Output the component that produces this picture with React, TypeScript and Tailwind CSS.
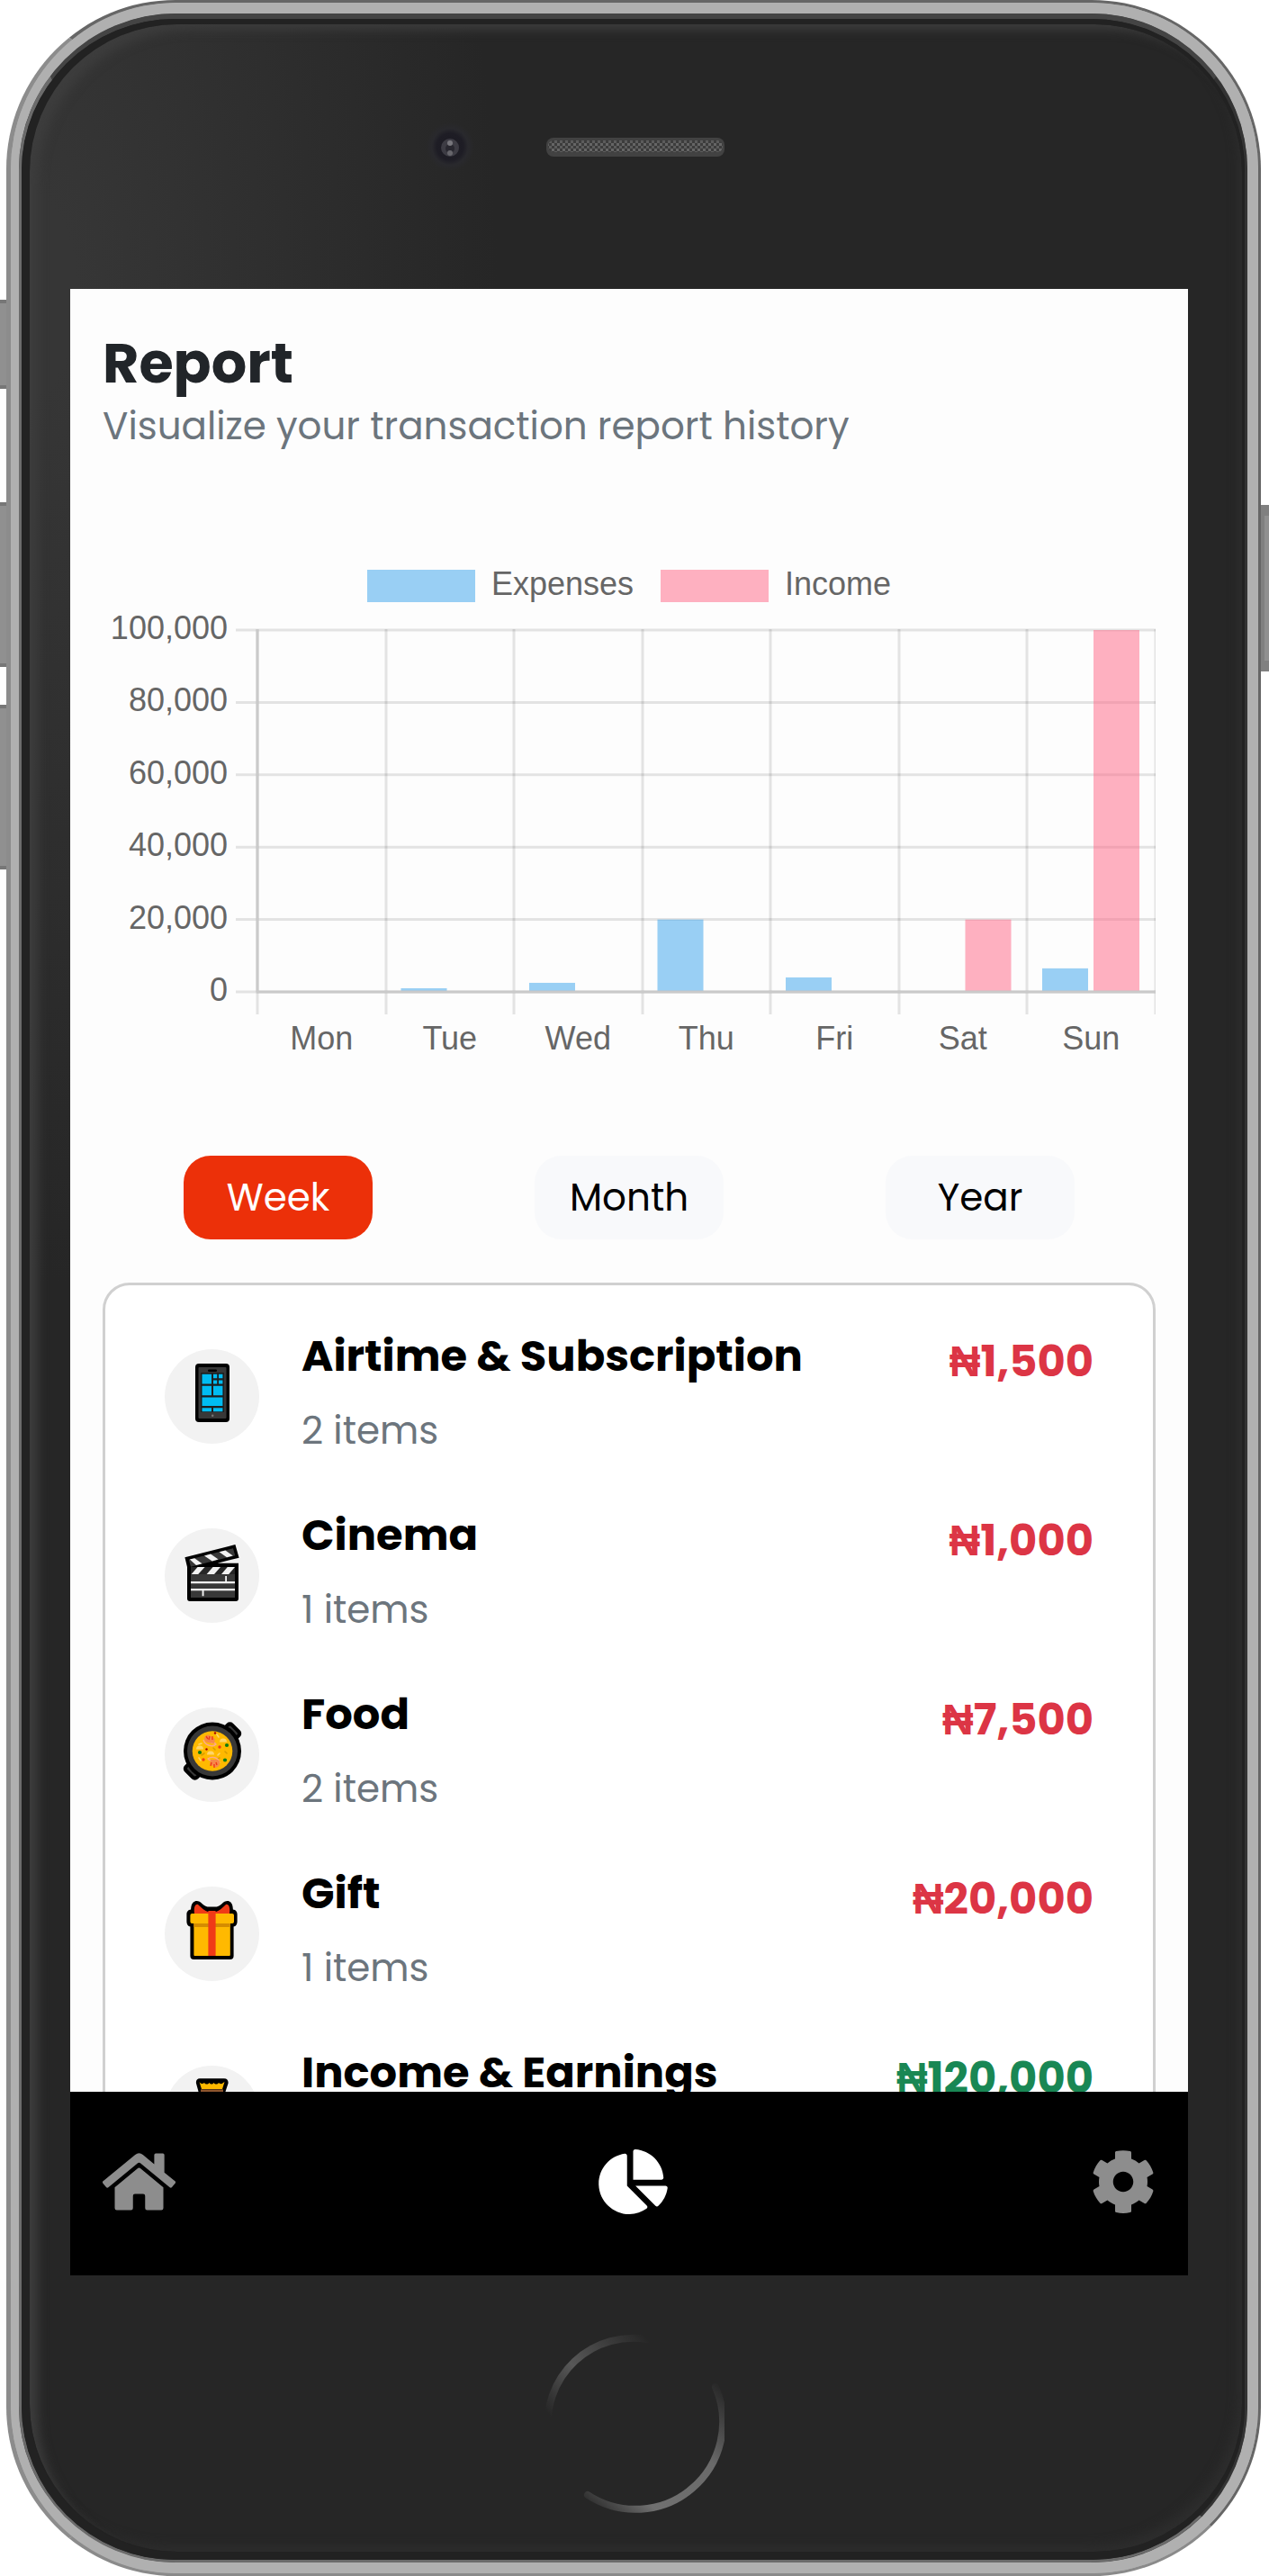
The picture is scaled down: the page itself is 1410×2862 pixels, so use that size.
import { useState } from "react";
import type { ReactNode } from "react";
import { FaChartPie, FaCog, FaHome } from "react-icons/fa";

/* ---------- category icons (72 x 72) ---------- */

function PhoneIcon() {
  return (
    <svg viewBox="0 0 72 72" className="size-[72px]" aria-hidden="true">
      <rect x="17" y="4" width="38" height="65" rx="4" fill="#000" />
      <rect x="20.5" y="8" width="31" height="57" rx="1" fill="#383838" />
      <rect x="31" y="10.4" width="10" height="2.6" rx="1.2" fill="#000" />
      <rect x="23" y="14" width="26" height="44" fill="#1f1f1f" />
      <g fill="#00bcf2">
        <path d="M24.5 15.8H35v10.8H24.5zM37 15.8h4.2v4.4H37zM43 15.8h4.4v4.4H43zM37 22.4h4.2v4.2H37zM43 22.4h4.4v4.2H43z" />
        <path d="M24.5 28.8H35v10.4H24.5zM37 28.8h10.4v10.4H37zM24.5 41.4h22.9V51H24.5zM24.5 53.2H35v4H24.5zM37 53.2h10.4v4H37z" />
      </g>
      <rect x="35" y="60.6" width="2.4" height="2.4" rx="1" fill="#777" />
    </svg>
  );
}

function ClapperIcon() {
  return (
    <svg viewBox="0 0 72 72" className="size-[72px]" aria-hidden="true">
      <path d="M5.4 20.3 61.4 6l4.2 14.7-24 6H65V66a3 3 0 0 1-3 3H11a3 3 0 0 1-3-3V31Z" fill="#000" />
      <path d="M9.8 22.8 59 10.2l2.2 8L12 30.8Z" fill="#383838" />
      <path d="m10.8 22.6 5.4-1.4 8.4 6-6.6 1.8ZM27 18.4l7-1.8 8.6 6-6.8 1.8ZM43.6 14.2l6.8-1.8 8.4 6-6.8 1.8Z" fill="#f2f2f2" />
      <path d="M12 31h49v34H12z" fill="#383838" />
      <path d="M12 31h49v8H12z" fill="#262626" />
      <path d="m12.6 39 7-8h8l-7.4 8ZM29.6 39l7-8h8.400l-7 8ZM46 39l6.800-8H61l-6.800 8Z" fill="#f2f2f2" />
      <path d="M12 47h49v2.200H12zM12 55h49v2.200H12zM50.200 41H52v6h-1.800zM24.600 57.200h1.900v6h-1.900z" fill="#f2f2f2" />
    </svg>
  );
}

function PanIcon() {
  return (
    <svg viewBox="0 0 72 72" className="size-[72px]" aria-hidden="true">
      <g transform="rotate(45 36 36.5)">
        <rect x="25.5" y="-1.5" width="21" height="76" rx="5" fill="#000" />
        <rect x="29.5" y="2.5" width="13" height="68" rx="2" fill="#383838" />
        <rect x="31.5" y="5" width="9" height="4.6" rx="1" fill="#000" />
        <rect x="31.5" y="63.5" width="9" height="4.6" rx="1" fill="#000" />
      </g>
      <circle cx="36" cy="36.5" r="32" fill="#000" />
      <circle cx="36" cy="36.5" r="28" fill="#383838" />
      <circle cx="36" cy="36.5" r="22.3" fill="#ffb900" />
      <path d="M44 26.5a4 4 0 0 1 8 0ZM18 34.500a4 4 0 0 1 8 0ZM30 40.500a4 4 0 0 1 8 0Z" fill="#ffd56b" />
      <g stroke="#d99d00" strokeWidth="1.6" strokeLinecap="round">
        <path d="m37 33 2 2M24 41l3-2M50 37l2 2M42 45l2-1" />
      </g>
      <g stroke="#ffd56b" strokeWidth="1.6" strokeLinecap="round">
        <path d="m41 18 2 3M21 29l3-1M21 44l2 3M44 39l-2 2" />
      </g>
      <path d="M26 24c2 7 11 8 14 5-1-2-4-2-6-2" fill="none" stroke="#ffa88f" strokeWidth="1.4" />
      <path d="M27 23c0-4 5-6 7-3l5 3-1 5-6-1c-3 0-4-1-5-4Z" fill="#f7894a" />
      <path d="M44 50c-1-7-9-8-13-5 1 2 3 2 5 2" fill="none" stroke="#ffa88f" strokeWidth="1.4" />
      <path d="M44 49c1 4-4 7-6 5l-5-3 1-5 6 0c3 0 4 1 4 3Z" fill="#f7894a" />
      <g stroke="#f03a17" strokeWidth="1.4">
        <path d="m33 20-1 4M36 20v4M29 20l2 3M34 53l1-4M38 55v-4M41 52l-1-3" />
      </g>
      <g fill="#f03a17">
        <circle cx="44" cy="32" r="1.7" />
        <circle cx="26" cy="46" r="1.7" />
      </g>
      <g fill="#a80000">
        <circle cx="39" cy="16.5" r="1.2" />
        <circle cx="29.5" cy="34.5" r="1.2" />
      </g>
      <g fill="#107c10">
        <circle cx="52" cy="30" r="2.1" />
        <circle cx="22" cy="38" r="2.1" />
        <circle cx="50" cy="46.5" r="2.1" />
      </g>
    </svg>
  );
}

function GiftIcon() {
  return (
    <svg viewBox="0 0 72 72" className="size-[72px]" aria-hidden="true">
      <path
        d="M16.500 4.400c3-1 6 .6 8 2.600 2 1.800 4 3 6 3.600h10.200c2-.6 4-1.800 6-3.600 2-2 5-3.600 8-2.600 3 1.200 4 4.600 4.200 9 3 .6 4.700 2 4.700 5.600v8c0 3-1.500 5-4 5.600V65a4 4 0 0 1-4 4H15.400a4 4 0 0 1-4-4V32.600c-2.500-.6-4-2.600-4-5.600v-8c0-3.600 1.700-5 4.700-5.600.2-4.400 1.300-7.800 4.400-9Z"
        fill="#000"
      />
      <path d="M16 18c-1-7 1-11 4-10 4 4 8 7 11 8h9c3-1 7-4 11-8 3-1 5 3 4 10Z" fill="#f03a17" />
      <rect x="15.4" y="28" width="40.4" height="37" rx="1" fill="#ffb900" />
      <path d="M15.400 29h40.400v4H15.400z" fill="#d48c00" />
      <rect x="11.4" y="18" width="48.6" height="11" rx="2" fill="#ffb900" />
      <path d="M31.400 15h8.200v50h-8.200z" fill="#f03a17" />
    </svg>
  );
}

function MoneyBagIcon() {
  return (
    <svg viewBox="0 0 72 72" className="size-[72px]" aria-hidden="true">
      <path
        d="M22 2.300h27c3.500 0 5 2.500 4.500 5.500l-3 9C58 24 64 36 64 50c0 13-8 19-28.500 19S7 63 7 50c0-14 6-26 13.500-33.200l-2.500-9c-.6-3 1-5.500 4-5.500Z"
        fill="#000"
      />
      <path d="M24 20h23c8 8 13 18 13 30 0 10-7 15-24.500 15S11 60 11 50c0-12 5-22 13-30Z" fill="#ffb900" />
      <path
        d="m21.500 6 2.500 8h23l2.500-8-1.500 1c-2 2-4 1-5 0-1.500 2-4 2-5.500 0-1.500 2-3.500 2-5 0-1.500 2-4 2-5.500 0-1.500 1.500-4 1.500-5.500-1Z"
        fill="#ffb900"
      />
      <path d="M23 14.400h25v4.600H23z" fill="#8e562e" />
    </svg>
  );
}

/* ---------- data ---------- */

type Category = { name: string; items: number; amount: string; income?: boolean; icon: ReactNode };

const categories: Category[] = [
  { name: "Airtime & Subscription", items: 2, amount: "₦1,500", icon: <PhoneIcon /> },
  { name: "Cinema", items: 1, amount: "₦1,000", icon: <ClapperIcon /> },
  { name: "Food", items: 2, amount: "₦7,500", icon: <PanIcon /> },
  { name: "Gift", items: 1, amount: "₦20,000", icon: <GiftIcon /> },
  { name: "Income & Earnings", items: 1, amount: "₦120,000", income: true, icon: <MoneyBagIcon /> },
];

const week = [
  { day: "Mon", expenses: 0, income: 0 },
  { day: "Tue", expenses: 1000, income: 0 },
  { day: "Wed", expenses: 2500, income: 0 },
  { day: "Thu", expenses: 20000, income: 0 },
  { day: "Fri", expenses: 4000, income: 0 },
  { day: "Sat", expenses: 0, income: 20000 },
  { day: "Sun", expenses: 6500, income: 100000 },
];

/* ---------- bar chart ---------- */

function BarChart() {
  const left = 172;
  const top = 80;
  const base = 482;
  const step = 142.5;
  const height = (v: number) => (v / 100000) * (base - top);
  const ticks = [100000, 80000, 60000, 40000, 20000, 0];
  const blue = "rgba(54,162,235,0.5)";
  const pink = "rgba(255,99,132,0.5)";

  return (
    <svg
      viewBox="0 0 1170 560"
      className="block w-full"
      role="img"
      aria-label="Expenses and income for the week"
      fontFamily="'Liberation Sans', Arial, sans-serif"
      fontSize="36"
      fill="#666"
    >
      <rect x="294" y="13" width="120" height="36" fill={blue} />
      <text x="432" y="41">Expenses</text>
      <rect x="620" y="13" width="120" height="36" fill={pink} />
      <text x="758" y="41">Income</text>

      {ticks.map((t) => (
        <g key={t}>
          <text x="139" y={base - height(t) + 10} textAnchor="end">
            {t.toLocaleString("en-US")}
          </text>
          <path d={`M148 ${base - height(t)}H1170`} stroke="rgba(0,0,0,0.1)" strokeWidth="3" />
        </g>
      ))}
      {[...week, null].map((_, i) => (
        <path
          key={i}
          d={`M${Math.round(left + i * step)} ${top - 1}V507`}
          stroke="rgba(0,0,0,0.1)"
          strokeWidth="3"
        />
      ))}
      {week.map((d, i) => {
        const x = left + i * step;
        return (
          <g key={d.day}>
            <text x={x + step / 2} y="546" textAnchor="middle">
              {d.day}
            </text>
            {d.expenses > 0 && (
              <rect x={x + 17} y={base - height(d.expenses)} width="51" height={height(d.expenses)} fill={blue} />
            )}
            {d.income > 0 && (
              <rect x={x + 74} y={base - height(d.income)} width="51" height={height(d.income)} fill={pink} />
            )}
          </g>
        );
      })}
      <path d={`M${left} ${top - 1}V${base}M${left - 1} ${base}H1170`} stroke="#cacaca" strokeWidth="3" fill="none" />
    </svg>
  );
}

/* ---------- report screen ---------- */

const ranges = ["Week", "Month", "Year"];

function Report() {
  const [range, setRange] = useState("Week");
  return (
    <main className="min-h-0 flex-1 overflow-hidden px-9 pt-[47px]">
      <h1 className="text-[62px] leading-[72px] font-bold text-[#212529]">Report</h1>
      <p className="mt-1 text-[42px] leading-[60px] text-[#6c757d]">
        Visualize your transaction report history
      </p>

      <div className="mt-[116px]">
        <BarChart />
      </div>

      <div className="mt-[104px] flex justify-around">
        {ranges.map((r) => (
          <button
            key={r}
            type="button"
            aria-pressed={r === range}
            onClick={() => setRange(r)}
            className={
              r === range
                ? "h-[93px] w-[210px] rounded-[30px] bg-[#ec3009] text-[42px] leading-[60px] text-white"
                : "h-[93px] w-[210px] rounded-[30px] bg-[#f8f9fb] text-[42px] leading-[60px] text-black"
            }
          >
            {r}
          </button>
        ))}
      </div>

      <ul className="mt-12 rounded-[30px] border-[3px] border-[#d0d0d0] bg-white px-[66px] pt-[51px] pb-12">
        {categories.map((c) => (
          <li key={c.name} className="flex h-[199px] items-start">
            <div className="mt-5 flex size-[105px] shrink-0 justify-center rounded-full bg-[#f2f2f2] pt-3">
              {c.icon}
            </div>
            <div className="ml-[47px] flex-1">
              <h2 className="text-[48px] leading-[56px] font-bold text-black">{c.name}</h2>
              <p className="mt-[25px] text-[42px] leading-[60px] text-[#6c757d]">{c.items} items</p>
            </div>
            <span
              className={
                c.income
                  ? "mt-1.5 text-[48px] leading-[56px] font-bold text-[#198754]"
                  : "mt-1.5 text-[48px] leading-[56px] font-bold text-[#dc3545]"
              }
            >
              {c.amount}
            </span>
          </li>
        ))}
      </ul>
    </main>
  );
}

function TabBar() {
  return (
    <nav className="flex h-[204px] shrink-0 items-center justify-between bg-black px-9 pb-1 text-[#8d8d8d]">
      <a href="#home" aria-label="Home">
        <FaHome className="h-[72px] w-[81px]" />
      </a>
      <a href="#report" aria-label="Report" aria-current="page" className="text-white">
        <FaChartPie className="h-[72px] w-[77px]" />
      </a>
      <a href="#settings" aria-label="Settings">
        <FaCog className="size-[72px]" />
      </a>
    </nav>
  );
}

/* ---------- handset ---------- */

function TopBezel() {
  return (
    <div className="relative flex h-[294px] shrink-0 items-start justify-center pt-[126px] pl-3.5">
      <svg viewBox="0 0 198 22" className="h-[22px] w-[198px]" aria-hidden="true">
        <defs>
          <pattern id="mesh" width="6" height="6" patternUnits="userSpaceOnUse">
            <rect width="6" height="6" fill="#3c3c3c" />
            <rect width="3" height="3" fill="#666" />
            <rect x="3" y="3" width="3" height="3" fill="#5c5c5c" />
          </pattern>
        </defs>
        <rect width="198" height="21" rx="8" fill="#424242" />
        <rect x="2" y="3" width="194" height="13" rx="6" fill="url(#mesh)" />
      </svg>
      <svg
        viewBox="0 0 60 60"
        className="absolute top-[106px] left-1/2 ml-[-229px] size-[60px]"
        aria-hidden="true"
      >
        <defs>
          <radialGradient id="lens">
            <stop offset="0" stopColor="#1b1a22" />
            <stop offset="0.55" stopColor="#1e1d25" />
            <stop offset="0.75" stopColor="#29292d" />
            <stop offset="1" stopColor="#29292d" stopOpacity="0" />
          </radialGradient>
        </defs>
        <circle cx="30" cy="30" r="27" fill="url(#lens)" />
        <circle cx="30" cy="31" r="10" fill="#3d3c44" />
        <circle cx="30" cy="32" r="5" fill="#28272f" />
        <circle cx="30" cy="26" r="3" fill="#77767c" />
        <circle cx="30" cy="37" r="3" fill="#66656b" />
      </svg>
    </div>
  );
}

function BottomBezel() {
  return (
    <div className="flex h-[307px] shrink-0 items-start justify-center pt-[64px] pl-2.5">
      <button type="button" aria-label="Home button" className="size-[202px] rounded-full">
        <svg viewBox="0 0 202 202" className="size-[202px]" aria-hidden="true">
          <defs>
            <linearGradient id="arcTop" x1="0" y1="0.8" x2="1" y2="0">
              <stop offset="0" stopColor="#262626" />
              <stop offset="0.4" stopColor="#585858" />
              <stop offset="1" stopColor="#262626" />
            </linearGradient>
            <linearGradient id="arcBottom" x1="0" y1="1" x2="1" y2="0">
              <stop offset="0" stopColor="#262626" />
              <stop offset="0.25" stopColor="#707070" />
              <stop offset="0.65" stopColor="#6a6a6a" />
              <stop offset="1" stopColor="#262626" />
            </linearGradient>
          </defs>
          <g fill="none" strokeWidth="8" strokeLinecap="round">
            <path d="M6 110A95 95 0 0 1 116 7" stroke="url(#arcTop)" />
            <path d="M192 60A97 97 0 0 1 50 180" stroke="url(#arcBottom)" />
          </g>
        </svg>
      </button>
    </div>
  );
}

export default function App() {
  return (
    <div className="relative h-screen min-h-[2000px] overflow-hidden bg-white pr-[9px] pl-[7px] font-['Poppins','Liberation_Sans',sans-serif]">
      {/* side keys */}
      <span className="absolute top-[333px] left-0 h-[99px] w-3 border-y-4 border-r-4 border-[#777] bg-[#909090]" />
      <span className="absolute top-[558px] left-0 h-[183px] w-3 border-y-4 border-r-4 border-[#777] bg-[#909090]" />
      <span className="absolute top-[783px] left-0 h-[183px] w-3 border-y-4 border-r-4 border-[#777] bg-[#909090]" />
      <span className="absolute top-[561px] right-0 h-[185px] w-[9px] border-y-[12px] border-l-4 border-[#808080] bg-[#909090]" />

      <div className="relative h-full rounded-[188px] border-t-[3px] border-r-[3px] border-b-[3px] border-l-[5px] border-t-[#666] border-r-[#666] border-b-[#8a8a8a] border-l-[#8c8c8c] bg-[#b0b0b0]">
        <div className="h-full rounded-[185px] border-t-[12px] border-r-[12px] border-b-[12px] border-l-[9px] border-[#b0b0b0] bg-[#444]">
          <div className="h-full rounded-[174px] border-t-[6px] border-r-[3px] border-b-[3px] border-l-[3px] border-t-[#444] border-r-[#333] border-b-[#6b6b6b] border-l-[#6b6b6b] bg-[#222]">
            <div className="h-full rounded-[170px] border-t-[6px] border-r-[3px] border-b-[9px] border-l-[9px] border-[#222] bg-[#222]">
              <div className="flex h-full flex-col rounded-[164px] bg-[#262626] bg-[radial-gradient(ellipse_520px_1100px_at_0px_300px,#363636_10%,#262626_100%)] pr-[60px] pl-[45px] shadow-[inset_15px_12px_12px_-6px_#3d3d3d,inset_-10px_-12px_12px_-6px_#2d2d2d]">
                <TopBezel />
                <div className="flex min-h-0 flex-1 flex-col bg-[#fdfdfd]">
                  <Report />
                  <TabBar />
                </div>
                <BottomBezel />
              </div>
            </div>
          </div>
        </div>
      </div>
    </div>
  );
}
